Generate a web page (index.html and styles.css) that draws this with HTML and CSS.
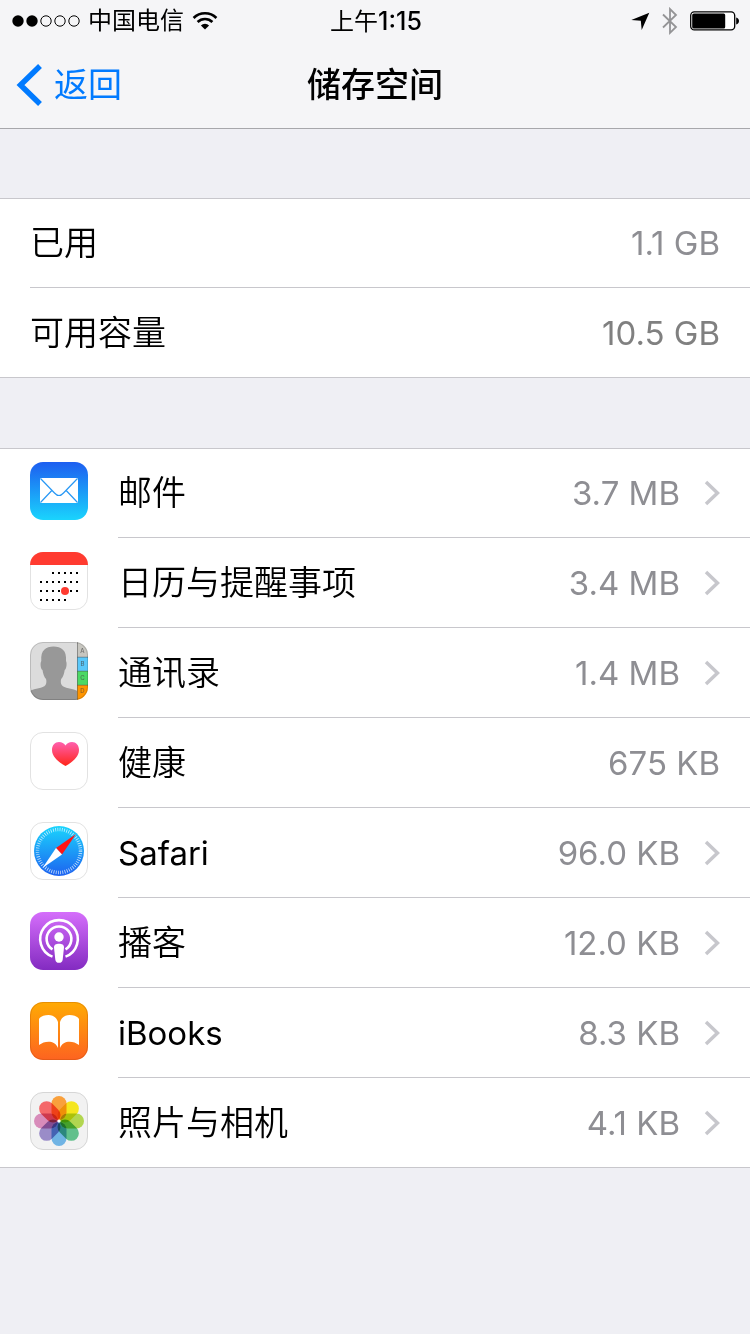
FILE: index.html
```html
<!DOCTYPE html>
<html lang="zh-CN">
<head>
<meta charset="utf-8">
<meta name="viewport" content="width=device-width, initial-scale=1">
<title>储存空间</title>
<link rel="stylesheet" href="styles.css">
</head>
<body>
<header class="header">
  <div class="status">
    <div class="status-left">
      <svg class="signal" width="68" height="14" viewBox="0 0 68 14" aria-hidden="true">
        <circle cx="6" cy="7" r="5.7"/><circle cx="20" cy="7" r="5.7"/>
        <g fill="none" stroke="#000" stroke-width="1"><circle cx="34" cy="7" r="5.2"/><circle cx="48" cy="7" r="5.2"/><circle cx="62" cy="7" r="5.2"/></g>
      </svg>
      <span>中国电信</span>
      <svg class="wifi" width="26" height="20" viewBox="0 0 26 20" aria-hidden="true">
        <g fill="none" stroke="#000" stroke-width="2.6"><path d="M1.6 7a16.2 16.2 0 0 1 22.8 0"/><path d="M5.6 11a10.5 10.5 0 0 1 14.8 0"/></g>
        <path d="M13 18.6L8.9 14.5a5.8 5.8 0 0 1 8.2 0z"/>
      </svg>
    </div>
    <time class="time">上午<span class="digits">1:15</span></time>
    <div class="status-right">
      <svg width="19" height="19" viewBox="0 0 19 19" aria-hidden="true"><path d="M18.3.7L10.7 18 9.8 8.8.3 8.1z"/></svg>
      <svg width="16" height="28" viewBox="0 0 16 28" aria-hidden="true"><path d="M1 7.5L14 20 8 25.8V2l6 6L1 20.5" fill="none" stroke="#949496" stroke-width="1.8"/></svg>
      <svg width="50" height="20" viewBox="0 0 50 20" aria-hidden="true"><rect x=".7" y=".9" width="44" height="18" rx="3.6" fill="#fff" stroke="#000" stroke-width="1.3"/><rect x="2.2" y="2.5" width="33" height="15" rx="1.6"/><path d="M46.2 6.5c1.6.5 2.8 1.6 2.8 3.5s-1.200 3-2.800 3.500z"/></svg>
    </div>
  </div>
  <nav class="navbar">
    <button class="back" type="button">
      <svg width="27" height="42" viewBox="0 0 27 42" aria-hidden="true"><path d="M24 2L4.500 21 24 40" fill="none" stroke="#007aff" stroke-width="5.500"/></svg>
      <span>返回</span>
    </button>
    <h1 class="title">储存空间</h1>
  </nav>
</header>

<main class="main">
  <ul class="list">
    <li class="row"><span class="label">已用</span><span class="value">1.1 GB</span></li>
    <li class="row"><span class="label">可用容量</span><span class="value value-dark">10.5 GB</span></li>
  </ul>

  <ul class="list apps">
    <li><a class="row" href="#mail">
      <svg class="icon" viewBox="0 0 58 58" aria-hidden="true">
        <defs><linearGradient id="mail" x2="0" y2="1"><stop stop-color="#1d5ef0"/><stop offset="1" stop-color="#1ad4fd"/></linearGradient></defs>
        <rect width="58" height="58" rx="13" fill="url(#mail)"/>
        <rect x="10" y="16" width="38" height="25" rx="1" fill="#fff"/>
        <g fill="none" stroke="#2898f5" stroke-width="1.200"><path d="M10.500 16.500L24.500 31q4.500 5 9 0L47.500 16.500"/><path d="M10.500 40.500L21.800 28.500M47.500 40.500L36.200 28.500"/></g>
      </svg>
      <span class="label">邮件</span><span class="value">3.7 MB</span><svg class="chevron" viewBox="0 0 16 26" aria-hidden="true"><path d="M2 2l11.500 11L2 24"/></svg>
    </a></li>
    <li><a class="row" href="#calendar">
      <svg class="icon" viewBox="0 0 58 58" aria-hidden="true">
        <rect x=".5" y=".5" width="57" height="57" rx="12.500" fill="#fff" stroke="#e2e2e2"/>
        <path d="M0 13A13 13 0 0 1 13 0H45A13 13 0 0 1 58 13z" fill="#ff3b30"/>
        <g fill="none" stroke="#000" stroke-width="2" stroke-dasharray="2 4"><path d="M22 21H48M10 30H48M10 39H48M10 48H36"/></g>
        <circle cx="35" cy="39" r="4" fill="#ff3b30"/>
      </svg>
      <span class="label">日历与提醒事项</span><span class="value">3.4 MB</span><svg class="chevron" viewBox="0 0 16 26" aria-hidden="true"><path d="M2 2l11.500 11L2 24"/></svg>
    </a></li>
    <li><a class="row" href="#contacts">
      <svg class="icon" viewBox="0 0 58 58" aria-hidden="true">
        <defs><clipPath id="tile"><rect width="58" height="58" rx="13"/></clipPath></defs>
        <g clip-path="url(#tile)">
          <rect width="58" height="58" fill="#dcdcdc"/>
          <path d="M0 49c5-3 13-2.500 15.500-6 1-1.500 1.200-4 .5-6-2-2-3-6-3.500-9-2-1-2.500-7-1.200-9C10.500 8 16 4.500 23.500 4.500S37 8 36 19c1.200 2 .5 8-1.300 9-.5 3-1.500 7-3.500 9-.7 2-.5 4.500.5 6 2.500 3.500 10 3 15.800 6v9H0z" fill="#989898"/>
          <rect x="47" width="11" height="15" fill="#c7c6c0"/><rect x="47" y="15" width="11" height="14" fill="#5ac8fa"/><rect x="47" y="29" width="11" height="14" fill="#4cd964"/><rect x="47" y="43" width="11" height="15" fill="#ff9500"/>
          <path d="M47.500 0V58M47 15.200H58M47 29.200H58M47 43.200H58" stroke="#555" stroke-opacity=".6" stroke-width=".9"/>
          <g class="tabs" text-anchor="middle"><text x="52.500" y="11">A</text><text x="52.500" y="24">B</text><text x="52.500" y="38">C</text><text x="52.500" y="51">D</text></g>
        </g>
        <rect x=".5" y=".5" width="57" height="57" rx="12.500" fill="none" stroke="#000" stroke-opacity=".15"/>
      </svg>
      <span class="label">通讯录</span><span class="value">1.4 MB</span><svg class="chevron" viewBox="0 0 16 26" aria-hidden="true"><path d="M2 2l11.500 11L2 24"/></svg>
    </a></li>
    <li class="row">
      <svg class="icon" viewBox="0 0 58 58" aria-hidden="true">
        <defs><linearGradient id="heart" x2="0" y2="1"><stop stop-color="#ff5fae"/><stop offset="1" stop-color="#ff2518"/></linearGradient></defs>
        <rect x=".5" y=".5" width="57" height="57" rx="12.500" fill="#fff" stroke="#e2e2e2"/>
        <path d="M35.500 34C30 31 22 25.500 22 18c0-5 3-8 7-8 3 0 5 1.300 6.500 3.500C37 11.300 39 10 42 10c4 0 7 3 7 8 0 7.500-8 13-13.500 16z" fill="url(#heart)"/>
      </svg>
      <span class="label">健康</span><span class="value">675 KB</span>
    </li>
    <li><a class="row" href="#safari">
      <svg class="icon" viewBox="0 0 58 58" aria-hidden="true">
        <defs><linearGradient id="safari" x2="0" y2="1"><stop stop-color="#1ad5fd"/><stop offset="1" stop-color="#1d62f0"/></linearGradient></defs>
        <rect x=".5" y=".5" width="57" height="57" rx="12.500" fill="#fff" stroke="#e2e2e2"/>
        <circle cx="29" cy="29" r="25" fill="url(#safari)"/>
        <circle cx="29" cy="29" r="21.500" fill="none" stroke="#fff" stroke-opacity=".75" stroke-width="3.500" stroke-dasharray=".8 1.452"/>
        <path d="M46 12L32 32.500 26 26z" fill="#ff1414"/><path d="M12.500 46L26 26 32 32.500z" fill="#fff"/>
      </svg>
      <span class="label latin">Safari</span><span class="value">96.0 KB</span><svg class="chevron" viewBox="0 0 16 26" aria-hidden="true"><path d="M2 2l11.500 11L2 24"/></svg>
    </a></li>
    <li><a class="row" href="#podcasts">
      <svg class="icon" viewBox="0 0 58 58" aria-hidden="true">
        <defs><linearGradient id="pod" x2="0" y2="1"><stop stop-color="#d56efb"/><stop offset="1" stop-color="#832bc1"/></linearGradient></defs>
        <rect width="58" height="58" rx="13" fill="url(#pod)"/>
        <g fill="none" stroke="#fff" stroke-width="2.600"><path d="M22.500 44.600A18.800 18.800 0 1 1 35.500 44.600"/><path d="M22.500 37.400A12.400 12.400 0 1 1 35.500 37.400"/></g>
        <circle cx="29" cy="25" r="4.700" fill="#fff"/>
        <path d="M24 35.500c0-3 2-3.800 5-3.800s5 .8 5 3.800l-1.300 12c-.3 2.500-1.500 3.300-3.700 3.300s-3.400-.8-3.700-3.300z" fill="#fff"/>
      </svg>
      <span class="label">播客</span><span class="value">12.0 KB</span><svg class="chevron" viewBox="0 0 16 26" aria-hidden="true"><path d="M2 2l11.500 11L2 24"/></svg>
    </a></li>
    <li><a class="row" href="#ibooks">
      <svg class="icon" viewBox="0 0 58 58" aria-hidden="true">
        <defs><linearGradient id="book" x2="0" y2="1"><stop stop-color="#ffab03"/><stop offset="1" stop-color="#fd6320"/></linearGradient></defs>
        <rect width="58" height="58" rx="13" fill="url(#book)"/>
        <rect x=".5" y=".5" width="57" height="57" rx="12.500" fill="none" stroke="#a04000" stroke-opacity=".25"/>
        <path d="M28 46V20c-1.500-4.500-5-7-9.500-7C14 13 10.500 14.500 9 17V43c6-4.500 16-5 19 3zM30 46V20c1.500-4.500 5-7 9.500-7 4.500 0 8 1.500 9.500 4V43c-6-4.500-16-5-19 3z" fill="#fff"/>
      </svg>
      <span class="label latin">iBooks</span><span class="value">8.3 KB</span><svg class="chevron" viewBox="0 0 16 26" aria-hidden="true"><path d="M2 2l11.500 11L2 24"/></svg>
    </a></li>
    <li><a class="row" href="#photos">
      <svg class="icon" viewBox="0 0 58 58" aria-hidden="true">
        <rect x=".5" y=".5" width="57" height="57" rx="12.500" fill="#f2f2f2" stroke="#d6d6d6"/>
        <g class="petals">
          <rect x="21.500" y="4" width="15" height="24" rx="7.500" fill="#f9a03c"/>
          <rect x="21.500" y="4" width="15" height="24" rx="7.500" fill="#f5e61e" transform="rotate(45 29 29)"/>
          <rect x="21.500" y="4" width="15" height="24" rx="7.500" fill="#b2d650" transform="rotate(90 29 29)"/>
          <rect x="21.500" y="4" width="15" height="24" rx="7.500" fill="#62c08c" transform="rotate(135 29 29)"/>
          <rect x="21.500" y="4" width="15" height="24" rx="7.500" fill="#70b4e4" transform="rotate(180 29 29)"/>
          <rect x="21.500" y="4" width="15" height="24" rx="7.500" fill="#9a8cc8" transform="rotate(225 29 29)"/>
          <rect x="21.500" y="4" width="15" height="24" rx="7.500" fill="#d88cba" transform="rotate(270 29 29)"/>
          <rect x="21.500" y="4" width="15" height="24" rx="7.500" fill="#f4686a" transform="rotate(315 29 29)"/>
        </g>
        <circle cx="29" cy="29" r="1.600" fill="#fff"/>
      </svg>
      <span class="label">照片与相机</span><span class="value">4.1 KB</span><svg class="chevron" viewBox="0 0 16 26" aria-hidden="true"><path d="M2 2l11.500 11L2 24"/></svg>
    </a></li>
  </ul>
</main>
</body>
</html>
```
FILE: styles.css
```css
* { box-sizing: border-box; }

body {
  margin: 0;
  min-height: 100vh;
  background: #efeff4;
  color: #000;
  font-family: Inter, "Noto Sans CJK SC", sans-serif;
  font-size: 34px;
  font-weight: 400;
  line-height: 40px;
}

svg { display: block; flex: none; }

.header {
  background: #f5f5f7;
  box-shadow: 0 1px 0 #a7a7ab;
}

.status {
  display: grid;
  grid-template-columns: 1fr auto 1fr;
  align-items: center;
  height: 42px;
  padding: 0 10px 0 12px;
  font-size: 24px;
}

.status-left, .status-right { display: flex; align-items: center; }
.status-left { gap: 8px; }
.status-right { justify-content: flex-end; gap: 12px; }
.digits { font-weight: 500; font-size: 25px; }

.navbar {
  display: grid;
  grid-template-columns: 1fr auto 1fr;
  align-items: center;
  height: 86px;
  padding: 0 16px;
}

.back {
  display: flex;
  align-items: center;
  gap: 11px;
  justify-self: start;
  padding: 0;
  border: 0;
  background: none;
  color: #007aff;
  font: inherit;
}

.title { margin: 0; font-size: 34px; font-weight: 500; }

.main {
  display: flex;
  flex-direction: column;
  gap: 70px;
  padding: 70px 0;
}

.list {
  margin: 0;
  padding: 0;
  list-style: none;
  background: #fff;
  box-shadow: inset 0 1px 0 #c8c7cc, inset 0 -1px 0 #c8c7cc;
}

.row {
  position: relative;
  display: flex;
  align-items: center;
  height: 90px;
  padding: 0 30px;
  color: inherit;
  text-decoration: none;
}

.row::after {
  content: "";
  position: absolute;
  right: 0;
  bottom: 0;
  left: 30px;
  height: 1px;
  background: #c8c7cc;
}

.apps .row::after { left: 118px; }

.icon { width: 58px; height: 58px; margin: 0 30px 4px 0; }
.label { flex: 1; font-weight: 350; }
.latin { font-size: 33px; font-weight: 400; }
.value { color: #8e8e93; font-size: 33px; }
.value-dark { color: #808080; }

.chevron {
  width: 16px;
  height: 26px;
  margin-left: 24px;
  fill: none;
  stroke: #c7c7cc;
  stroke-width: 3.5;
}

.tabs { font: 500 6px Inter, sans-serif; fill: #444; fill-opacity: .7; }
.petals { isolation: isolate; }
.petals rect { mix-blend-mode: multiply; }
```
